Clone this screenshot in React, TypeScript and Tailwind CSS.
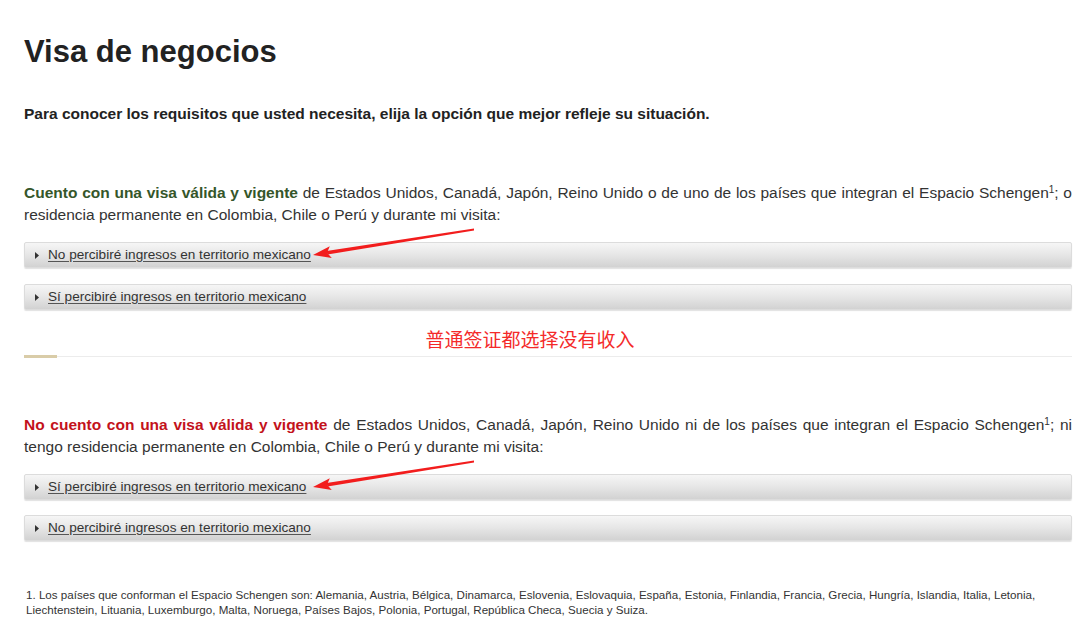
const options1 = [
  "No percibiré ingresos en territorio mexicano",
  "Sí percibiré ingresos en territorio mexicano",
];

const options2 = [
  "Sí percibiré ingresos en territorio mexicano",
  "No percibiré ingresos en territorio mexicano",
];

function Arrow() {
  // red hand-drawn annotation arrow pointing left
  return (
    <svg
      className="absolute pointer-events-none"
      style={{ left: 276, top: -20 }}
      width="180"
      height="40"
      viewBox="0 0 180 40"
    >
      <path d="M173 5.5 L173 7.5 L26.5 31.4 L25.5 28 Z" fill="#f21d1d" />
      <path d="M12 32 L28.8 23.2 L26 29.7 L30.8 35 Z" fill="#f21d1d" />
    </svg>
  );
}

function OptionBar({ label, arrow }: { label: string; arrow?: boolean }) {
  return (
    <div className="relative h-[26px] w-full rounded-[2px] border border-[#dcdcdc] bg-gradient-to-b from-[#f6f6f6] via-[#e6e6e6] to-[#d2d2d2] shadow-[0_1px_1px_rgba(0,0,0,0.12)] flex items-center pl-[10px]">
      <svg width="4" height="7" viewBox="0 0 4 7" className="mr-[9px]">
        <path d="M0 0 L4 3.5 L0 7 Z" fill="#333" />
      </svg>
      <a className="text-[13.6px] text-[#333] underline underline-offset-2 decoration-[#555] cursor-pointer">
        {label}
      </a>
      {arrow && <Arrow />}
    </div>
  );
}

export default function App() {
  return (
    <div
      className="w-[1080px] min-h-[626px] bg-white pl-[24px] pr-[8px] pt-[34px] text-[#333]"
      style={{ fontFamily: '"Liberation Sans", Arial, "Noto Sans CJK SC", sans-serif' }}
    >
      <h1 className="text-[31px] leading-[36px] font-bold text-[#222]">Visa de negocios</h1>

      <p className="mt-[33px] text-[15.5px] leading-[22px] font-bold text-[#222]">
        Para conocer los requisitos que usted necesita, elija la opción que mejor refleje su situación.
      </p>

      {/* Con visa */}
      <p className="mt-[57px] text-[15.5px] leading-[22px] text-justify">
        <strong className="text-[#35562a]">Cuento con una visa válida y vigente</strong> de Estados Unidos, Canadá,
        Japón, Reino Unido o de uno de los países que integran el Espacio Schengen
        <sup className="text-[10px]">1</sup>; o residencia permanente en Colombia, Chile o Perú y durante mi visita:
      </p>
      <div className="mt-[16px] flex flex-col gap-[16px]">
        {options1.map((o, i) => (
          <OptionBar key={o} label={o} arrow={i === 0} />
        ))}
      </div>

      <p
        className="mt-[17px] pr-[36px] text-center text-[19px] leading-[24px] text-[#f42a2a]"
        style={{ fontFamily: '"Noto Sans CJK SC", sans-serif' }}
      >
        普通签证都选择没有收入
      </p>

      <div className="mt-[4px] relative h-[3px]">
        <div className="absolute left-0 right-0 top-[1px] h-px bg-[#ececec]" />
        <div className="relative w-[33px] h-[3px] bg-[#d9cca8]" />
      </div>

      {/* Sin visa */}
      <p className="mt-[56px] text-[15.5px] leading-[22px] text-justify">
        <strong className="text-[#c3121b]">No cuento con una visa válida y vigente</strong> de Estados Unidos,
        Canadá, Japón, Reino Unido ni de los países que integran el Espacio Schengen
        <sup className="text-[10px]">1</sup>; ni tengo residencia permanente en Colombia, Chile o Perú y durante mi
        visita:
      </p>
      <div className="mt-[16px] flex flex-col gap-[15px]">
        {options2.map((o, i) => (
          <OptionBar key={o} label={o} arrow={i === 0} />
        ))}
      </div>

      <p className="mt-[46px] pl-[2px] pr-[20px] text-[11.6px] leading-[15px] text-[#333]">
        1. Los países que conforman el Espacio Schengen son: Alemania, Austria, Bélgica, Dinamarca, Eslovenia,
        Eslovaquia, España, Estonia, Finlandia, Francia, Grecia, Hungría, Islandia, Italia, Letonia, Liechtenstein,
        Lituania, Luxemburgo, Malta, Noruega, Países Bajos, Polonia, Portugal, República Checa, Suecia y Suiza.
      </p>
    </div>
  );
}
